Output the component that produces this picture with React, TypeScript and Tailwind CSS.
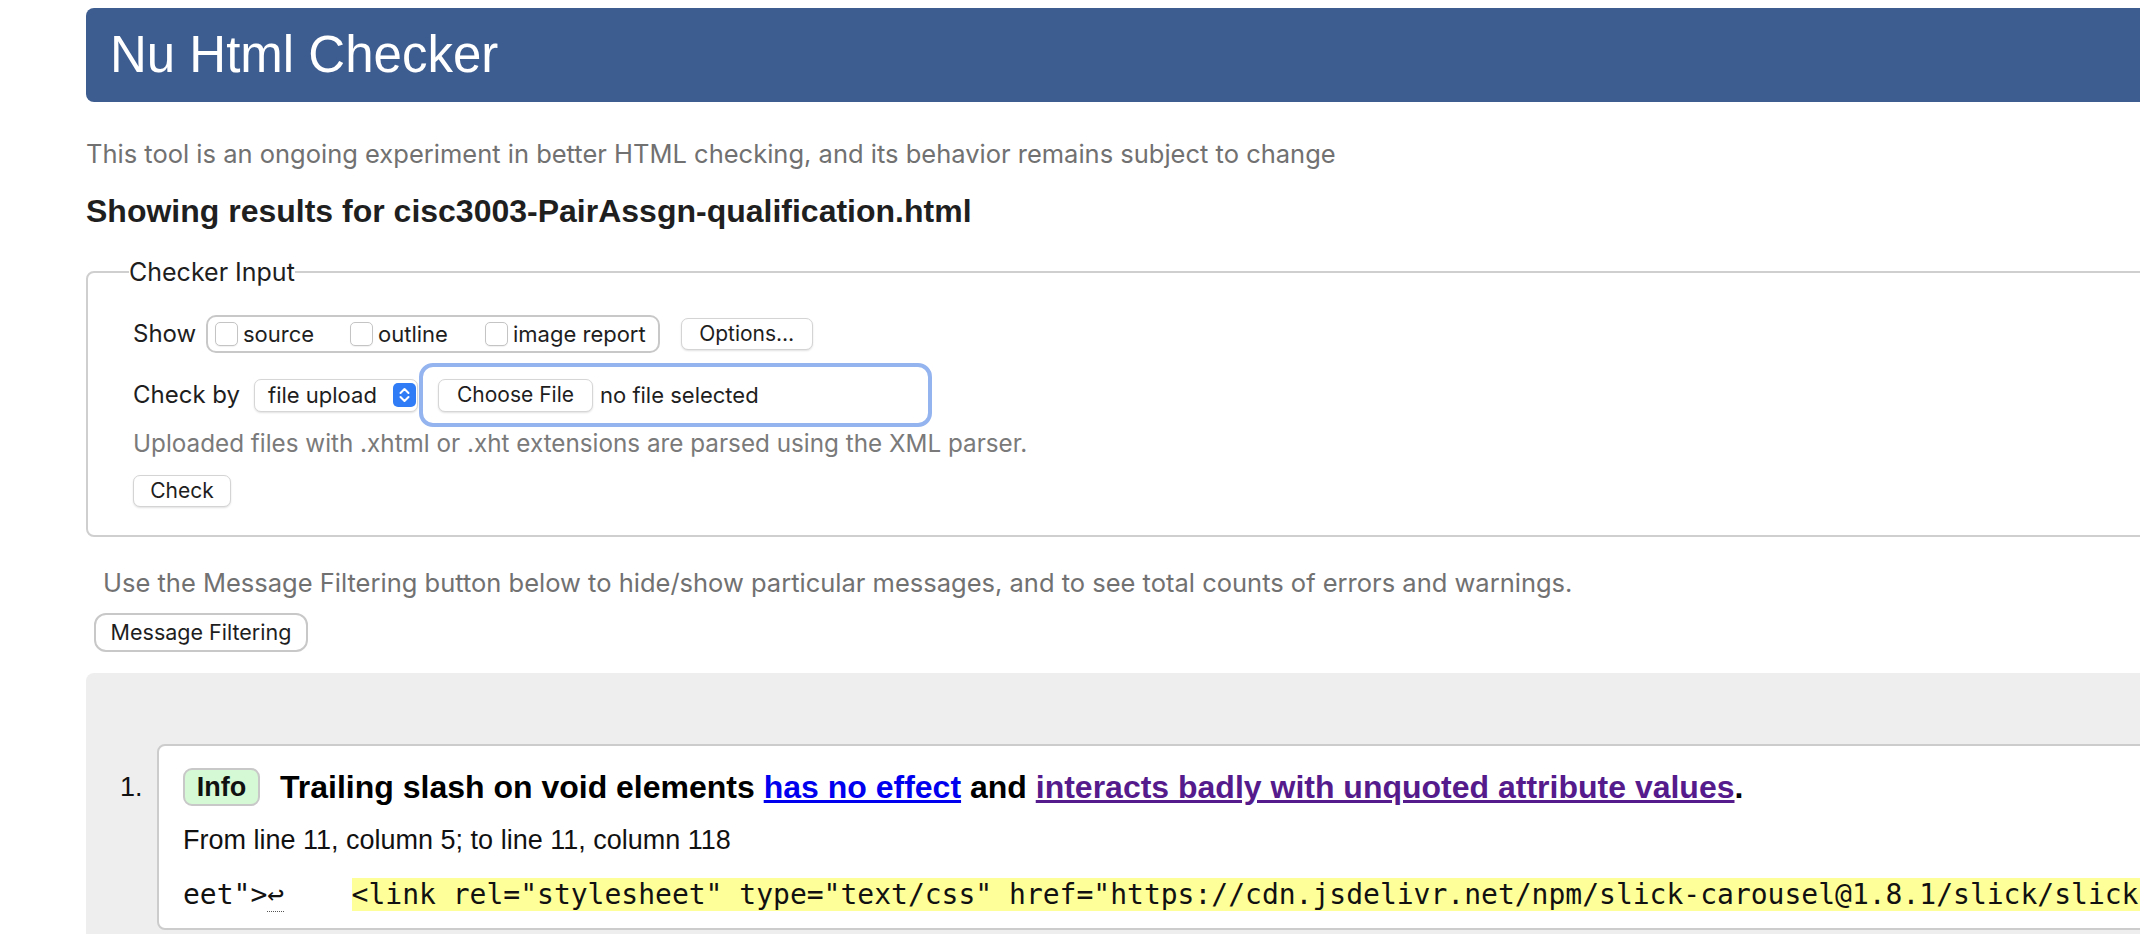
const ui = "font-['Inter','Noto_Sans',sans-serif]";
const helv = "font-['Liberation_Sans',Arial,sans-serif]";
const mono = "font-['DejaVu_Sans_Mono','Liberation_Mono',monospace]";

function Checkbox() {
  return (
    <span className="inline-block h-[24px] w-[23px] shrink-0 rounded-[5px] border border-[#c4c4c4] bg-white shadow-[0_1px_1px_rgba(0,0,0,0.06)]" />
  );
}

function Stepper() {
  return (
    <svg width="23" height="24" viewBox="0 0 23 24" className="shrink-0">
      <rect x="0" y="0" width="23" height="24" rx="5" fill="#2f7cf6" />
      <path d="M7.5 10 L11.5 6 L15.5 10" stroke="white" strokeWidth="2" fill="none" strokeLinecap="round" strokeLinejoin="round" />
      <path d="M7.5 14 L11.5 18 L15.5 14" stroke="white" strokeWidth="2" fill="none" strokeLinecap="round" strokeLinejoin="round" />
    </svg>
  );
}

function CheckerInput() {
  return (
    <fieldset className="mt-[26px] rounded-[8px] border-2 border-[#cfcfcf] pb-[28px] pl-[45px] pt-[28px]">
      <legend className={`${ui} -ml-[4px] text-[25px] leading-[30px] text-[#1e1e1e]`}>Checker Input</legend>

      <div className="flex h-[38px] items-center">
        <span className={`${ui} w-[73px] text-[24px] leading-[38px] text-[#1e1e1e]`}>Show</span>
        <div className="flex h-[38px] items-center rounded-[10px] border-2 border-[#c8c8c8] pl-[7px] pr-[12px]">
          <label className="flex w-[135px] items-center gap-[5px]">
            <Checkbox />
            <span className={`${ui} text-[22px] text-[#1e1e1e]`}>source</span>
          </label>
          <label className="flex w-[135px] items-center gap-[5px]">
            <Checkbox />
            <span className={`${ui} text-[22px] text-[#1e1e1e]`}>outline</span>
          </label>
          <label className="flex items-center gap-[5px]">
            <Checkbox />
            <span className={`${ui} whitespace-nowrap text-[22px] text-[#1e1e1e]`}>image report</span>
          </label>
        </div>
        <button className={`${ui} ml-[21px] flex h-[32px] w-[132px] items-center justify-center rounded-[7px] border border-[#d4d4d4] bg-white text-[21px] text-[#1e1e1e] shadow-[0_1px_2px_rgba(0,0,0,0.12)]`}>
          Options…
        </button>
      </div>

      <div className="mt-[10px] flex h-[64px] items-center">
        <span className={`${ui} w-[121px] whitespace-nowrap text-[24px] leading-[64px] text-[#1e1e1e]`}>Check by</span>
        <div className="flex h-[33px] w-[164px] items-center justify-between rounded-[7px] border border-[#d6d6d6] bg-white pl-[13px] pr-[1px] shadow-[0_1px_2px_rgba(0,0,0,0.12)]">
          <span className={`${ui} whitespace-nowrap text-[22px] text-[#1e1e1e]`}>file upload</span>
          <Stepper />
        </div>
        <div className="ml-[1px] flex h-[64px] w-[513px] items-center rounded-[14px] border-4 border-[#94b4f0] pl-[15px]">
          <button className={`${ui} flex h-[33px] w-[155px] items-center justify-center rounded-[7px] border border-[#d6d6d6] bg-white text-[21px] text-[#1e1e1e] shadow-[0_1px_2px_rgba(0,0,0,0.12)]`}>
            Choose File
          </button>
          <span className={`${ui} ml-[7px] whitespace-nowrap text-[22px] text-[#1e1e1e]`}>no file selected</span>
        </div>
      </div>

      <p className={`${ui} mt-[2px] whitespace-nowrap text-[24.25px] leading-[30px] text-[#7a7a7a]`}>
        Uploaded files with .xhtml or .xht extensions are parsed using the XML parser.
      </p>

      <button className={`${ui} mt-[16px] flex h-[32px] w-[98px] items-center justify-center rounded-[7px] border border-[#d4d4d4] bg-white text-[21px] text-[#1e1e1e] shadow-[0_1px_2px_rgba(0,0,0,0.12)]`}>
        Check
      </button>
    </fieldset>
  );
}

function Message() {
  return (
    <div className="flex">
      <span className={`${helv} w-[37px] shrink-0 pt-[24px] text-[27px] leading-[38px] text-[#111]`}>1.</span>
      <div className="flex-1 rounded-[8px] border-2 border-[#cccccc] bg-white pb-[15px] pl-[24px] pt-[22px]">
        <div className="flex items-center gap-[20px]">
          <span className={`${helv} flex h-[38px] w-[77px] items-center justify-center rounded-[9px] border-2 border-[#c8c8c8] bg-[#d5f9d4] text-[27px] font-bold text-[#111]`}>
            Info
          </span>
          <p className={`${helv} whitespace-nowrap text-[32px] font-bold leading-[38px] text-black`}>
            Trailing slash on void elements{" "}
            <a className="text-[#0000ee] underline">has no effect</a> and{" "}
            <a className="text-[#551a8b] underline">interacts badly with unquoted attribute values</a>.
          </p>
        </div>
        <p className={`${helv} mt-[17px] whitespace-nowrap text-[27px] leading-[34px] text-[#111]`}>
          From line 11, column 5; to line 11, column 118
        </p>
        <p className={`${mono} mt-[20px] whitespace-pre text-[28px] leading-[36px] text-[#111]`}>
          eet"&gt;<span className="border-b border-dotted border-[#555]">↩</span>{"    "}
          <span className="bg-[#ffff99]">
            &lt;link rel="stylesheet" type="text/css" href="https://cdn.jsdelivr.net/npm/slick-carousel@1.8.1/slick/slick-theme.css"&gt;
          </span>
        </p>
      </div>
    </div>
  );
}

export default function App() {
  return (
    <div className="h-[934px] w-full overflow-hidden bg-white">
      <div className="w-[2400px] pl-[86px] pt-2">
        <header className="flex h-[94px] items-center rounded-l-[8px] bg-[#3d5c8f] pl-6">
          <h1 className={`${helv} text-[51px] leading-[94px] text-white`}>Nu Html Checker</h1>
        </header>

        <p className={`${ui} mt-[36px] text-[25.5px] leading-[32px] text-[#717171]`}>
          This tool is an ongoing experiment in better HTML checking, and its behavior remains subject to change
        </p>
        <h2 className={`${helv} mt-[21px] text-[32px] font-bold leading-[40px] text-[#1f1f1f]`}>
          Showing results for cisc3003-PairAssgn-qualification.html
        </h2>

        <CheckerInput />

        <p className={`${ui} ml-[17px] mt-[30px] text-[25.5px] leading-[32px] text-[#717171]`}>
          Use the Message Filtering button below to hide/show particular messages, and to see total counts of errors and warnings.
        </p>
        <button className={`${ui} ml-[8px] mt-[14px] flex h-[39px] w-[214px] items-center justify-center rounded-[12px] border-2 border-[#c8c8c8] bg-white text-[21.5px] text-[#1e1e1e]`}>
          Message Filtering
        </button>

        <section className="mt-[21px] h-[400px] rounded-tl-[8px] bg-[#eeeeee] pl-[34px] pt-[71px]">
          <Message />
        </section>
      </div>
    </div>
  );
}
